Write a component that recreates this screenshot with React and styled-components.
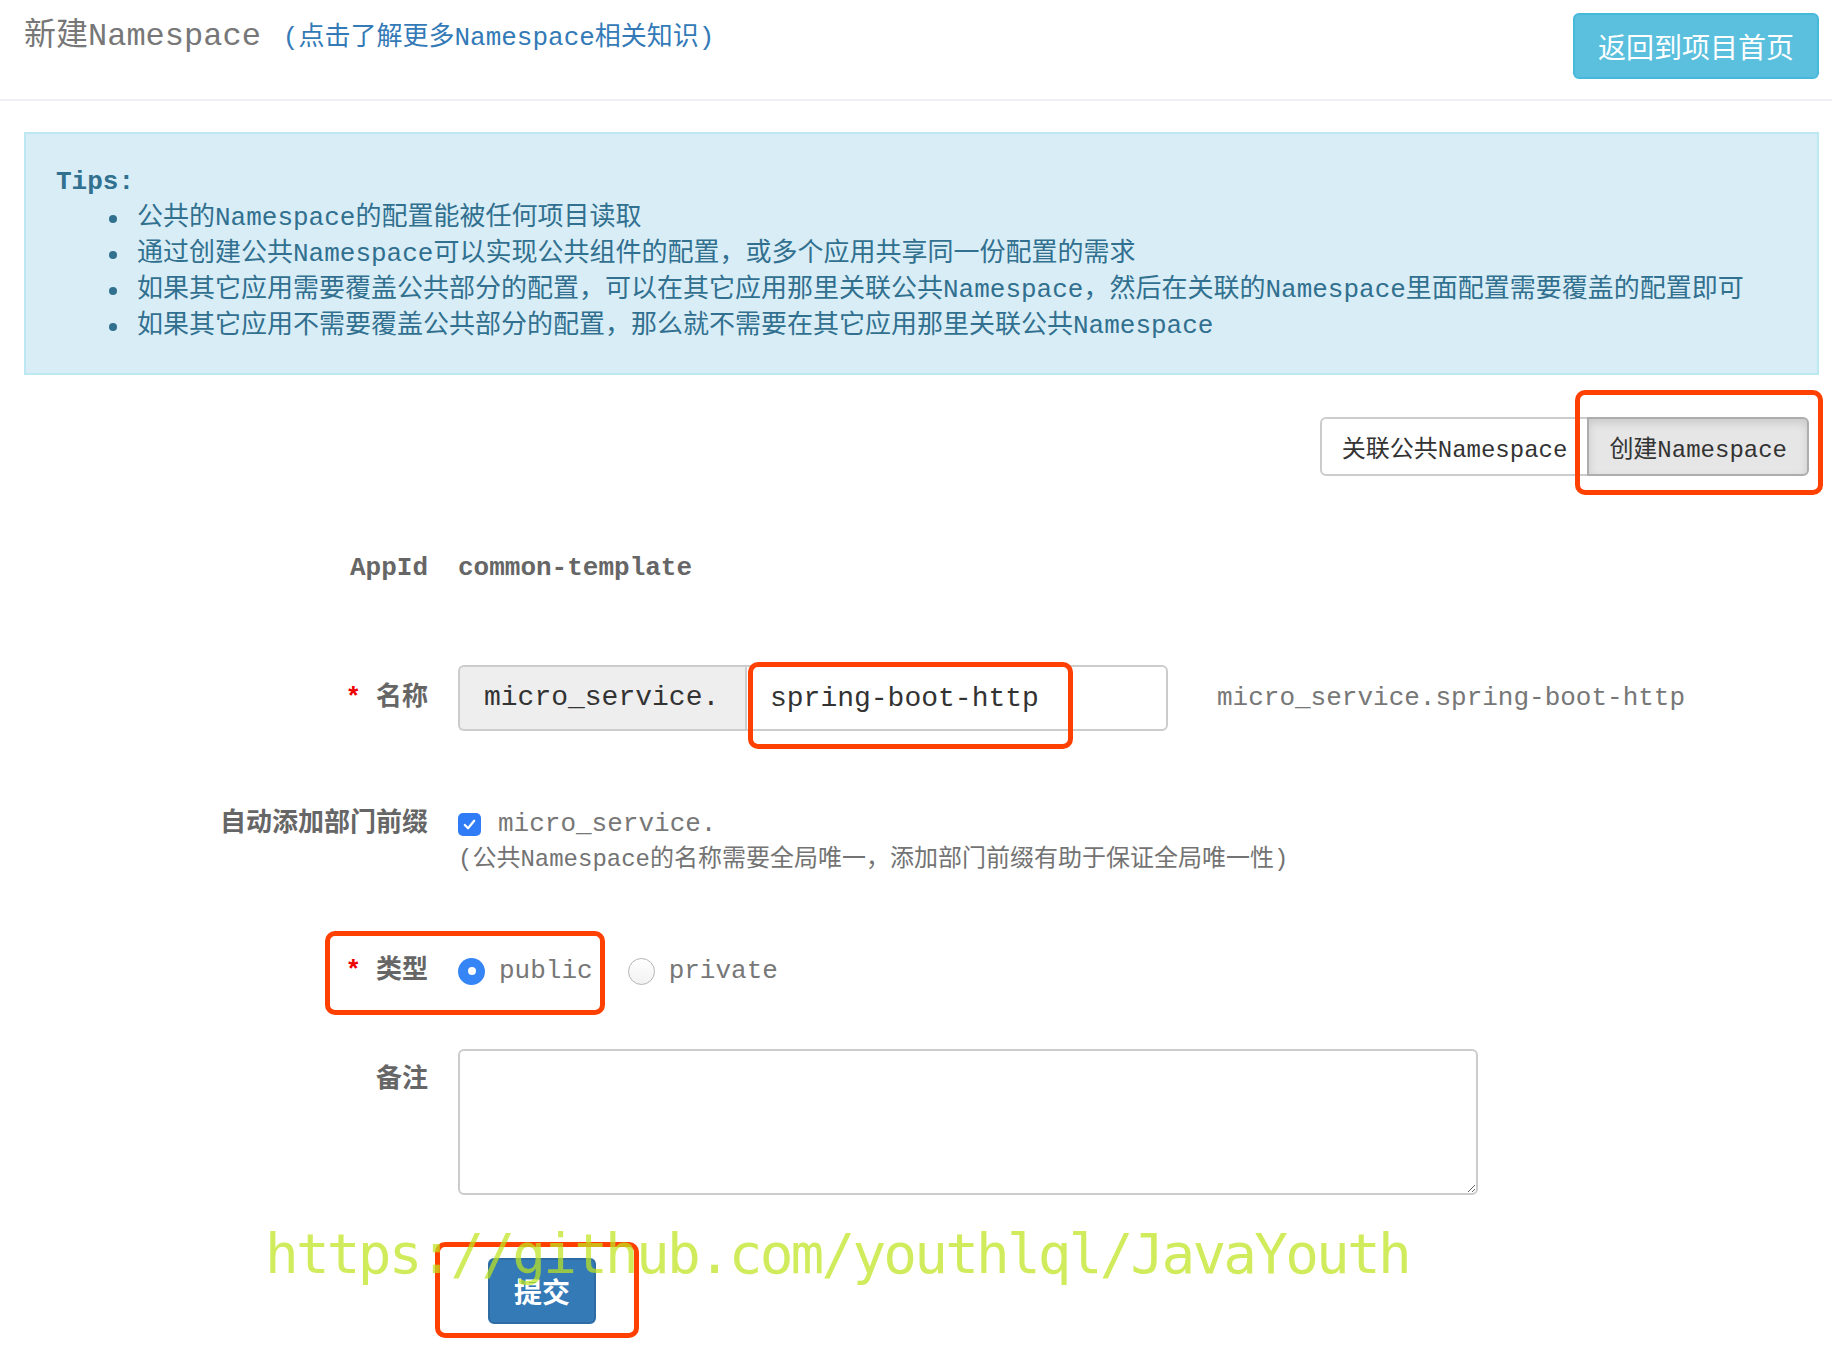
import React from 'react';
import styled, { createGlobalStyle } from 'styled-components';

const GlobalStyle = createGlobalStyle`
  body {
    margin: 0;
    background: #fff;
    font-family: "Liberation Mono", "Noto Sans CJK SC", monospace;
  }
  * { box-sizing: border-box; }
`;

const Page = styled.div`
  position: relative;
  width: 1832px;
  min-height: 1354px;
`;

const Header = styled.header`
  display: flex;
  justify-content: space-between;
  align-items: flex-start;
  height: 101px;
  padding: 13px 13px 0 24px;
  border-bottom: 2px solid #eef0f3;
`;

const Title = styled.h1`
  margin: 2px 0 0;
  font-size: 32px;
  line-height: 44px;
  font-weight: normal;
  color: #777;
`;

const TitleLink = styled.a`
  margin-left: 22px;
  font-size: 26px;
  color: #337ab7;
  text-decoration: none;
`;

const BackButton = styled.button`
  width: 246px;
  height: 66px;
  background: #5bc0de;
  border: 2px solid #46b8da;
  border-radius: 6px;
  color: #fff;
  font-family: "Noto Sans CJK SC", sans-serif;
  font-size: 28px;
  cursor: pointer;
`;

const Tips = styled.div`
  height: 243px;
  margin: 31px 13px 0 24px;
  padding: 30px;
  background: #d9edf7;
  border: 2px solid #bce8f1;
  color: #31708f;
  font-size: 26px;
  line-height: 36px;
`;

const TipsTitle = styled.strong`
  display: block;
`;

const TipsList = styled.ul`
  margin: 0;
  padding-left: 81px;
  list-style: none;
`;

const TipsItem = styled.li`
  position: relative;

  &::before {
    content: '';
    position: absolute;
    left: -28px;
    top: 15px;
    width: 8px;
    height: 8px;
    border-radius: 50%;
    background: #31708f;
  }
`;

const Actions = styled.div`
  display: flex;
  justify-content: flex-end;
  margin: 42px 23px 0 0;
`;

const ActionButton = styled.button`
  height: 59px;
  padding: 0 20px;
  font-family: "Liberation Mono", "Noto Sans CJK SC", monospace;
  font-size: 24px;
  color: #333;
  background: ${p => (p.$active ? '#e6e6e6' : '#fff')};
  border: 2px solid ${p => (p.$active ? '#adadad' : '#ccc')};
  border-radius: ${p => (p.$active ? '0 6px 6px 0' : '6px 0 0 6px')};
  box-shadow: ${p => (p.$active ? 'inset 0 4px 8px rgba(0,0,0,0.125)' : 'none')};
  margin-left: ${p => (p.$active ? '-2px' : '0')};
`;

const Anchor = styled.span`
  position: relative;
  display: inline-flex;
`;

const Mark = styled.span`
  position: absolute;
  inset: ${p => p.$inset};
  border: 5px solid #ff4000;
  border-radius: 10px;
  pointer-events: none;
  z-index: 2;
`;

const Form = styled.form`
  margin: 0;
`;

const Row = styled.div`
  position: relative;
  display: grid;
  grid-template-columns: 428px 1fr;
  column-gap: 30px;
  align-items: ${p => p.$align || 'center'};
  margin-top: ${p => p.$top}px;
`;

const Label = styled.label`
  text-align: right;
  font-weight: bold;
  font-size: 26px;
  line-height: 36px;
  color: #666;
  padding-top: ${p => p.$pad || 0}px;
`;

const Star = styled.span`
  color: #e00;
  margin-right: 15px;
`;

const Value = styled.div`
  font-weight: bold;
  font-size: 26px;
  line-height: 36px;
  color: #666;
`;

const Line = styled.div`
  display: flex;
  align-items: center;
  font-size: 26px;
  line-height: 36px;
  color: #777;
`;

const InputGroup = styled.div`
  position: relative;
  display: flex;
  width: 710px;
  height: 66px;
`;

const Addon = styled.span`
  display: flex;
  align-items: center;
  width: 287px;
  padding-left: 24px;
  background: #eee;
  border: 2px solid #ccc;
  border-right: none;
  border-radius: 6px 0 0 6px;
  font-size: 28px;
  color: #333;
`;

const TextInput = styled.input`
  flex: 1;
  min-width: 0;
  padding: 0 23px;
  border: 2px solid #ccc;
  border-radius: 0 6px 6px 0;
  font-family: "Liberation Mono", monospace;
  font-size: 28px;
  color: #333;
  outline: none;
`;

const Preview = styled.span`
  margin-left: 49px;
`;

const Checkbox = styled.span`
  display: inline-flex;
  align-items: center;
  justify-content: center;
  width: 23px;
  height: 23px;
  border-radius: 5px;
  background: #2f7cf6;
`;

const OptionText = styled.span`
  margin-left: ${p => p.$gap || 14}px;
`;

const Help = styled.div`
  font-size: 24px;
  line-height: 36px;
  color: #737373;
`;

const Radio = styled.span`
  display: inline-flex;
  align-items: center;
  justify-content: center;
  width: 27px;
  height: 27px;
  border-radius: 50%;
  margin-left: ${p => p.$gap || 0}px;
  background: ${p => (p.$checked ? '#3585f6' : 'linear-gradient(#fff, #f2f2f2)')};
  border: ${p => (p.$checked ? 'none' : '1px solid #b5b5b5')};

  &::after {
    content: '';
    display: ${p => (p.$checked ? 'block' : 'none')};
    width: 8px;
    height: 8px;
    border-radius: 50%;
    background: #fff;
  }
`;

const Remark = styled.textarea`
  width: 1020px;
  height: 146px;
  border: 2px solid #ccc;
  border-radius: 6px;
  font-family: "Liberation Mono", monospace;
  font-size: 26px;
  outline: none;
`;

const SubmitButton = styled.button`
  width: 108px;
  height: 66px;
  background: #337ab7;
  border: 2px solid #2e6da4;
  border-radius: 6px;
  color: #fff;
  font-family: "Noto Sans CJK SC", sans-serif;
  font-weight: bold;
  font-size: 28px;
`;

const SubmitCell = styled.div`
  grid-column: 2;
  padding-left: 30px;
`;

const Watermark = styled.div`
  position: absolute;
  left: 265px;
  top: 1220px;
  font-family: "DejaVu Sans Mono", monospace;
  font-size: 56px;
  line-height: 68px;
  letter-spacing: -2.8px;
  color: rgba(190, 228, 30, 0.72);
  pointer-events: none;
  z-index: 5;
  white-space: nowrap;
`;

const tips = [
  '公共的Namespace的配置能被任何项目读取',
  '通过创建公共Namespace可以实现公共组件的配置，或多个应用共享同一份配置的需求',
  '如果其它应用需要覆盖公共部分的配置，可以在其它应用那里关联公共Namespace，然后在关联的Namespace里面配置需要覆盖的配置即可',
  '如果其它应用不需要覆盖公共部分的配置，那么就不需要在其它应用那里关联公共Namespace',
];

export default function App () {
  return (
    <Page>
      <GlobalStyle />
      <Header>
        <Title>
          新建Namespace
          <TitleLink href='#'>(点击了解更多Namespace相关知识)</TitleLink>
        </Title>
        <BackButton>返回到项目首页</BackButton>
      </Header>

      <Tips>
        <TipsTitle>Tips:</TipsTitle>
        <TipsList>
          {tips.map(t => <TipsItem key={t}>{t}</TipsItem>)}
        </TipsList>
      </Tips>

      <Actions>
        <ActionButton>关联公共Namespace</ActionButton>
        <Anchor>
          <ActionButton $active>创建Namespace</ActionButton>
          <Mark $inset='-27px -14px -19px -14px' />
        </Anchor>
      </Actions>

      <Form onSubmit={e => e.preventDefault()}>
        <Row $top={74}>
          <Label>AppId</Label>
          <Value>common-template</Value>
        </Row>

        <Row $top={79}>
          <Label><Star>*</Star>名称</Label>
          <Line>
            <InputGroup>
              <Addon>micro_service.</Addon>
              <TextInput defaultValue='spring-boot-http' />
              <Mark $inset='-3px auto -18px 290px' style={{ width: 325 }} />
            </InputGroup>
            <Preview>micro_service.spring-boot-http</Preview>
          </Line>
        </Row>

        <Row $top={75} $align='start'>
          <Label>自动添加部门前缀</Label>
          <div>
            <Line>
              <Checkbox>
                <svg width='15' height='15' viewBox='0 0 16 16'>
                  <path d='M3 8.5 L6.5 12 L13 4' fill='none' stroke='#fff' strokeWidth='2.4' strokeLinecap='round' strokeLinejoin='round' />
                </svg>
              </Checkbox>
              <OptionText $gap={17}>micro_service.</OptionText>
            </Line>
            <Help>(公共Namespace的名称需要全局唯一，添加部门前缀有助于保证全局唯一性)</Help>
          </div>
        </Row>

        <Row $top={75}>
          <Label><Star>*</Star>类型</Label>
          <Line>
            <Radio $checked />
            <OptionText>public</OptionText>
            <Radio $gap={35} />
            <OptionText>private</OptionText>
          </Line>
          <Mark $inset='-22px auto -26px 325px' style={{ width: 280 }} />
        </Row>

        <Row $top={60} $align='start'>
          <Label $pad={13}>备注</Label>
          <Remark />
        </Row>

        <Row $top={63}>
          <SubmitCell>
            <Anchor>
              <SubmitButton type='submit'>提交</SubmitButton>
              <Mark $inset='-16px -43px -14px -53px' />
            </Anchor>
          </SubmitCell>
        </Row>
      </Form>

      <Watermark>https://github.com/youthlql/JavaYouth</Watermark>
    </Page>
  );
}
